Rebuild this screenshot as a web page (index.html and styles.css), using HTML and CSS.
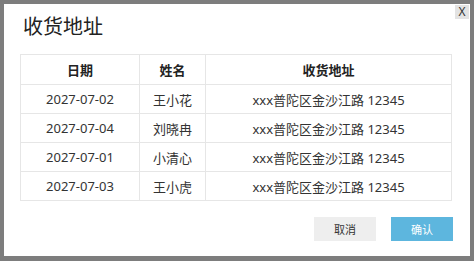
FILE: index.html
```html
<!DOCTYPE html>
<html lang="zh-cn">
<head>
    <meta charset="UTF-8">
    <title>收货地址</title>
    <link rel="stylesheet" href="styles.css">
</head>
<body>
    <div class="dialog">
        <button class="close">X</button>
        <h1>收货地址</h1>

        <table>
            <thead>
                <tr>
                    <th class="col-date">日期</th>
                    <th class="col-name">姓名</th>
                    <th>收货地址</th>
                </tr>
            </thead>
            <tbody>
                <tr><td>2027-07-02</td><td>王小花</td><td>xxx普陀区金沙江路 12345</td></tr>
                <tr><td>2027-07-04</td><td>刘晓冉</td><td>xxx普陀区金沙江路 12345</td></tr>
                <tr><td>2027-07-01</td><td>小清心</td><td>xxx普陀区金沙江路 12345</td></tr>
                <tr><td>2027-07-03</td><td>王小虎</td><td>xxx普陀区金沙江路 12345</td></tr>
            </tbody>
        </table>

        <div class="footer">
            <button class="btn btn-cancel">取消</button>
            <button class="btn btn-ok">确认</button>
        </div>
    </div>
</body>
</html>
```

FILE: styles.css
```css
* {
    box-sizing: border-box;
    font-family: 'Noto Sans', 'Noto Sans CJK SC', sans-serif;
}
body {
    margin: 0;
    padding: 4px;
    background-color: #7d7d7d;
}
.dialog {
    position: relative;
    width: 466px;
    height: 252px;
    background-color: white;
    padding: 9px 17px 0 16px;
}
.close {
    position: absolute;
    top: 1px;
    right: 1px;
    width: 14px;
    height: 14px;
    padding: 0;
    border: none;
    background-color: #e3e3e3;
    color: #333;
    font-size: 12px;
    line-height: 14px;
}
h1 {
    margin: 0 0 13px 3px;
    font-size: 20px;
    line-height: 28px;
    font-weight: normal;
    color: #222;
}
table {
    width: 432px;
    border-collapse: collapse;
    font-size: 13px;
    color: #333;
}
th, td {
    border: 1px solid #e6e6e6;
    text-align: center;
    padding: 0;
}
th {
    height: 30px;
    font-weight: bold;
    color: #222;
}
td {
    height: 29px;
}
.col-date {
    width: 119px;
}
.col-name {
    width: 66px;
}
.footer {
    display: flex;
    justify-content: flex-end;
    gap: 15px;
    margin-top: 16px;
}
.btn {
    width: 62px;
    height: 24px;
    border: none;
    font-size: 11px;
    padding: 0;
}
.btn-cancel {
    background-color: #eeeeee;
    color: #333;
}
.btn-ok {
    background-color: #5db6de;
    color: white;
}
```
